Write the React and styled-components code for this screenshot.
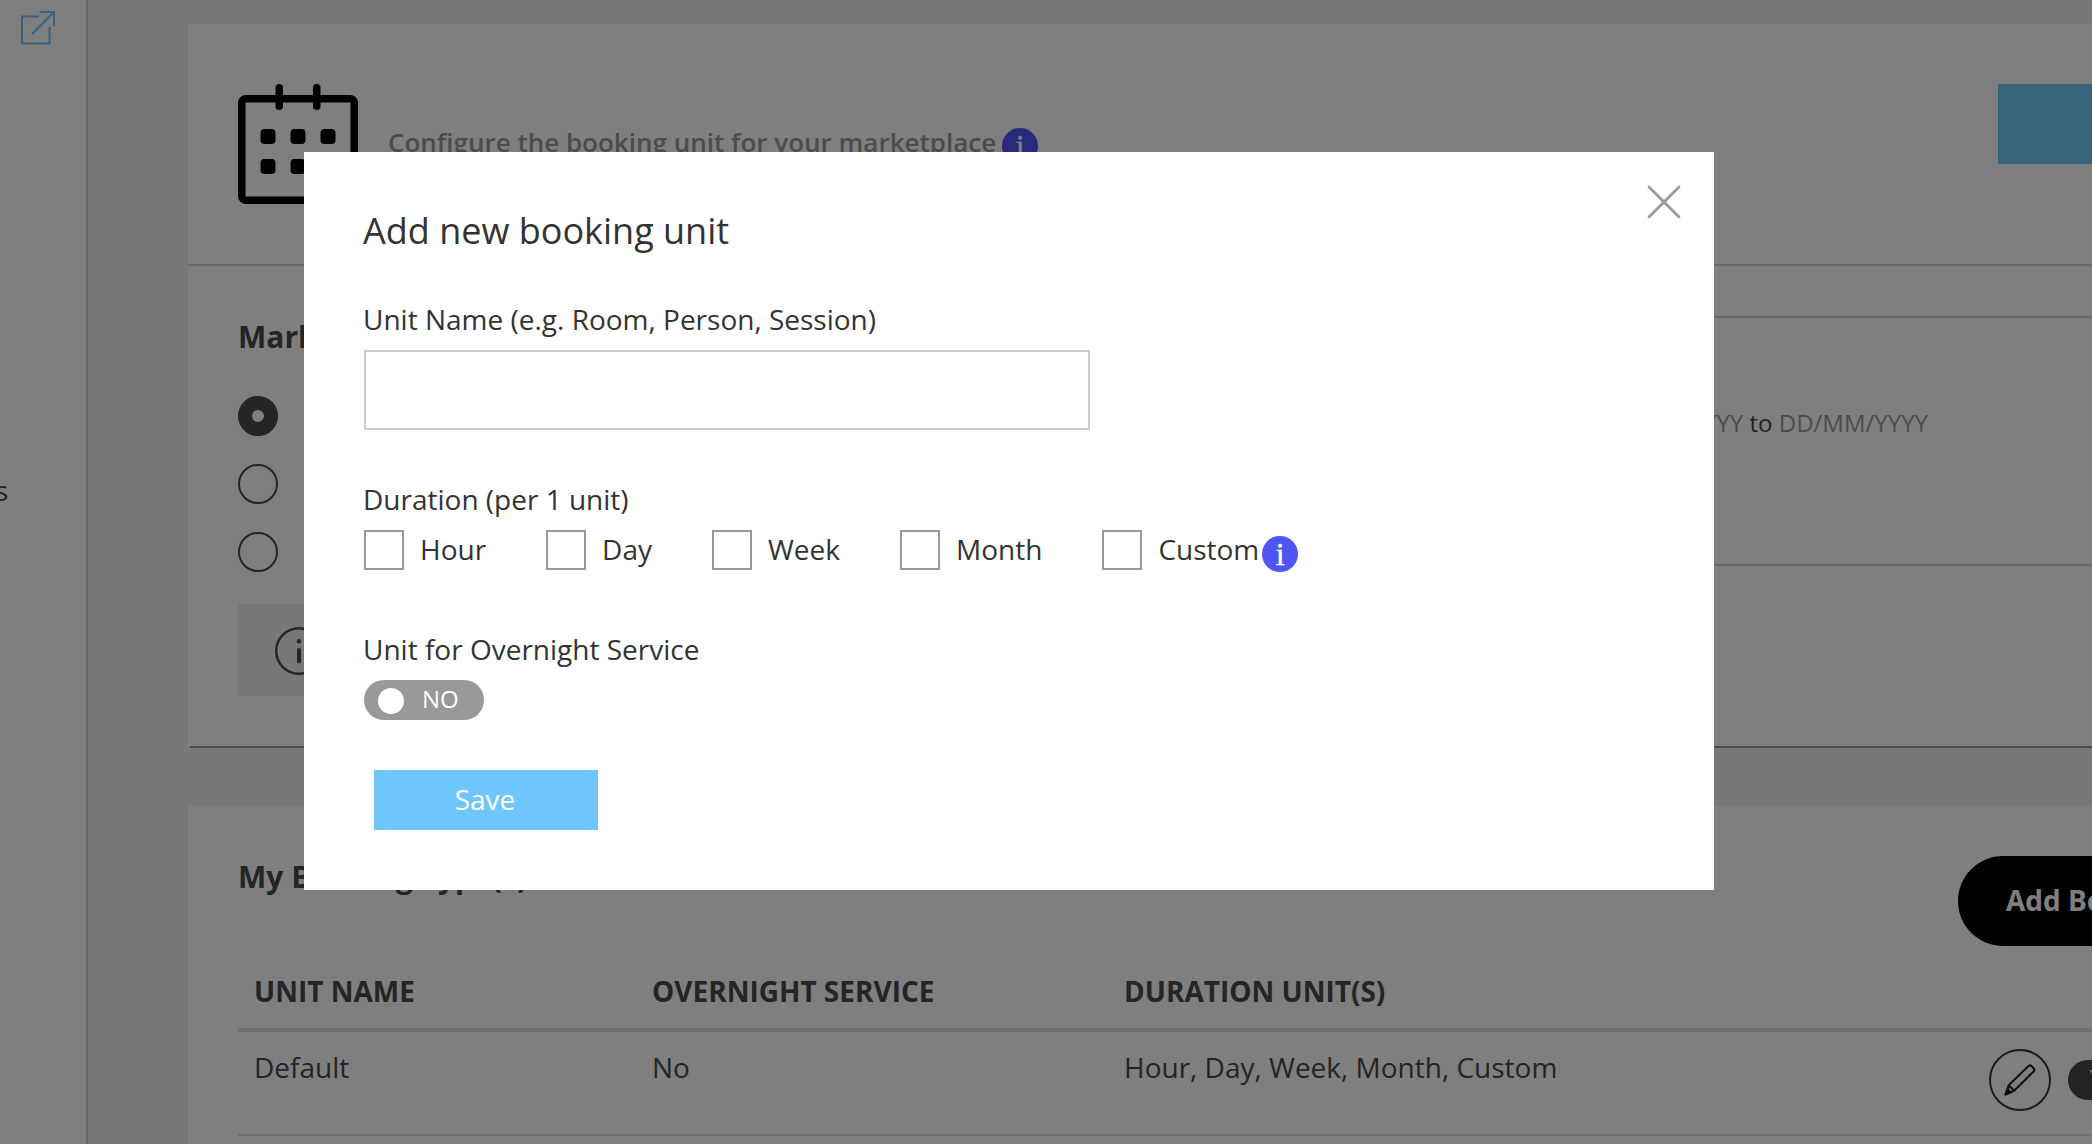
import { useState } from 'react';
import styled, { createGlobalStyle } from 'styled-components';

const GlobalStyle = createGlobalStyle`
  * {
    box-sizing: border-box;
  }
  body {
    margin: 0;
    overflow: hidden;
    background: #f0f0f0;
    color: #4a4a4a;
    font-family: 'Open Sans', sans-serif;
    font-size: 28px;
    line-height: 38px;
  }
  button {
    padding: 0;
    border: none;
    background: none;
    font: inherit;
    cursor: pointer;
  }
`;

// Page

const Page = styled.div`
  display: flex;
  width: 100vw;
  height: 1144px;
  overflow: hidden;
`;

const Sidebar = styled.aside`
  flex: none;
  width: 88px;
  padding: 10px 0 0 20px;
  border-right: 2px solid #d3d3d3;
  background: #fff;

  svg {
    display: block;
  }
`;

const SidebarItem = styled.div`
  width: 13px;
  margin: 425px 0 0 -25px;
`;

const Main = styled.main`
  flex: 1;
  min-width: 0;
  padding: 24px 0 0 100px;
`;

const Card = styled.section`
  background: #fff;
`;

const CardHeader = styled.header`
  display: flex;
  align-items: flex-start;
  height: 242px;
  padding: 60px 0 0 50px;
  border-bottom: 2px solid #d3d3d3;

  svg {
    flex: none;
  }
`;

const HeaderText = styled.div`
  display: flex;
  margin: 39px 0 0 30px;
  color: #999;
  font-size: 26px;
  font-weight: 600;
  white-space: nowrap;
`;

const HeaderButton = styled.button`
  width: 200px;
  height: 80px;
  margin-left: auto;
  margin-right: -106px;
  flex: none;
  background: #70c6fa;
`;

const InfoBadge = styled.span`
  flex: none;
  display: inline-block;
  width: 36px;
  height: 36px;
  margin: ${({ $margin }) => $margin};
  border-radius: 50%;
  background: #5055f5;
  color: #fff;
  font-family: 'Liberation Serif', serif;
  font-size: 32px;
  font-weight: 400;
  line-height: 36px;
  text-align: center;
  -webkit-text-stroke: 0.4px #fff;
`;

const Settings = styled.div`
  display: grid;
  grid-template-columns: 812px 1fr;
  height: 480px;
`;

const SettingsLeft = styled.div`
  padding: 50px 0 0 50px;
`;

const Title = styled.h2`
  margin: 0;
  font-size: 30px;
  font-weight: 700;
  line-height: 42px;
`;

const RadioList = styled.div`
  display: flex;
  flex-direction: column;
  gap: 28px;
  margin: 38px 0 32px;
`;

const Radio = styled.span`
  width: 40px;
  height: 40px;
  border: ${({ $checked }) => ($checked ? '14px' : '2px')} solid #4a4a4a;
  border-radius: 50%;
`;

const Notice = styled.div`
  height: 92px;
  padding: 22px 0 0 36px;
  background: #f0f0f0;
`;

const DateBox = styled.div`
  height: 250px;
  margin-top: 50px;
  padding: 86px 164px 0 0;
  border-top: 2px solid #d3d3d3;
  border-bottom: 2px solid #d3d3d3;
  font-size: 24px;
  text-align: right;

  span {
    color: #999;
  }
`;

const Divider = styled.div`
  height: 2px;
  margin: 0 0 58px 2px;
  background: #999;
`;

const TypesCard = styled(Card)`
  height: 400px;
  padding: 50px 0 0 50px;
`;

const TypesHeader = styled.div`
  display: flex;
  justify-content: space-between;
`;

const AddButton = styled.button`
  flex: none;
  width: 400px;
  height: 90px;
  margin-right: -266px;
  padding: 0 0 2px 48px;
  border-radius: 45px;
  background: #000;
  color: #fff;
  font-weight: 700;
  text-align: left;
`;

const Row = styled.div`
  display: grid;
  grid-template-columns: 398px 472px 865px 1fr;
  padding-left: 16px;
`;

const HeadRow = styled(Row)`
  height: 86px;
  padding-top: 26px;
  border-bottom: 4px solid #dedede;
  font-weight: 700;
`;

const BodyRow = styled(Row)`
  height: 104px;
  padding-top: 16px;
  border-bottom: 2px solid #dedede;
`;

const Actions = styled.div`
  display: flex;
  align-items: center;
  gap: 17px;
  height: 62px;
  margin-top: 1px;
`;

const EditButton = styled.button`
  flex: none;
  display: flex;
  align-items: center;
  justify-content: center;
  width: 62px;
  height: 62px;
  border: 2px solid #363648;
  border-radius: 50%;
`;

const RowSwitch = styled.div`
  flex: none;
  width: 120px;
  height: 40px;
  padding: 0 0 0 22px;
  border-radius: 20px;
  background: #464646;
  color: #fff;
  font-size: 24px;
  line-height: 36px;
`;

// Modal

const Overlay = styled.div`
  position: fixed;
  inset: 0;
  display: flex;
  align-items: flex-start;
  padding: 152px 0 0 304px;
  background: rgba(0, 0, 0, 0.5);
`;

const Dialog = styled.div`
  position: relative;
  width: 1410px;
  height: 738px;
  padding: 55px 60px 0;
  background: #fff;
  color: #333;
`;

const CloseButton = styled.button`
  position: absolute;
  top: 33px;
  right: 33px;
  width: 34px;
  height: 34px;

  svg {
    display: block;
  }
`;

const DialogTitle = styled.h1`
  margin: 0 0 45px -1px;
  font-size: 36px;
  font-weight: 400;
  line-height: 48px;
`;

const Label = styled.div`
  margin: 0 0 12px -1px;
`;

const Input = styled.input`
  display: block;
  width: 726px;
  height: 80px;
  margin: 0 0 50px;
  padding: 0 20px;
  border: 2px solid #ccc;
  outline: none;
  font: inherit;
`;

const CheckList = styled.div`
  display: flex;
  gap: 60px;
  height: 40px;
  margin-bottom: 60px;
`;

const CheckItem = styled.label`
  display: flex;
  gap: 16px;
  cursor: pointer;
`;

const Check = styled.input`
  appearance: none;
  width: 40px;
  height: 40px;
  margin: 0;
  border: 2px solid #999;
  background: ${({ checked }) => (checked ? '#999' : '#fff')};
`;

const Toggle = styled.button`
  display: flex;
  width: 120px;
  height: 40px;
  margin-bottom: 50px;
  padding: 8px 0 0 14px;
  border-radius: 20px;
  background: ${({ $on }) => ($on ? '#4a4a4a' : '#999')};
  color: #fff;
  font-size: 24px;
  line-height: 22px;

  &::before {
    content: '';
    width: 26px;
    height: 26px;
    margin-right: 18px;
    border-radius: 50%;
    background: #fff;
  }
`;

const SaveButton = styled.button`
  display: block;
  width: 224px;
  height: 60px;
  margin-left: 10px;
  padding: 0 2px 2px 0;
  background: #70c6fc;
  color: #fff;
`;

const ExternalIcon = () => (
  <svg width="36" height="36" fill="none" stroke="#70c6fa" strokeWidth="2">
    <path d="M19 6.5H2v27h27.500V17" />
    <path d="M20.500 2H34v13.500M34 2 12.500 23.500" strokeLinecap="round" />
  </svg>
);

const CalendarIcon = () => (
  <svg width="120" height="120" fill="none" stroke="#000">
    <rect x="3.750" y="14.750" width="112.500" height="101.500" rx="4" strokeWidth="7.500" />
    <path d="M41.250 3.750v18.500M78.750 3.750v18.500" strokeWidth="7.500" strokeLinecap="round" />
    {[45, 75].map((y) =>
      [22.5, 52.5, 82.5].map((x) => (
        <rect key={`${x}-${y}`} x={x} y={y} width="15" height="15" rx="4" fill="#000" stroke="none" />
      )),
    )}
  </svg>
);

const NoticeIcon = () => (
  <svg width="50" height="50" fill="none" stroke="#4a4a4a" strokeLinecap="round">
    <circle cx="25" cy="25" r="22.800" strokeWidth="2.500" />
    <path d="M25 24v11.500" strokeWidth="4" />
    <circle cx="25" cy="15.300" r="2.200" fill="#4a4a4a" stroke="none" />
  </svg>
);

const PencilIcon = () => (
  <svg width="32" height="32" fill="none" stroke="#1c1c1c" strokeWidth="2" strokeLinejoin="round">
    <path d="M1.500 30.500 4.500 21.500 24.500 2Q26 .8 27.500 2L29.800 4.500Q31 6 29.800 7.300L10.500 26.500Z" />
    <path d="M4.500 21.500 10.500 26.500M4 23 4.500 27.500" />
    <path d="M1.500 30.500 3.500 25.500 6.500 28.500Z" fill="#1c1c1c" />
  </svg>
);

const CloseIcon = () => (
  <svg width="34" height="34" stroke="#999" strokeWidth="2.700" strokeLinecap="round">
    <path d="M2 2 32 32M32 2 2 32" />
  </svg>
);

const DURATIONS = ['Hour', 'Day', 'Week', 'Month', 'Custom'];

function AddUnitDialog() {
  const [name, setName] = useState('');
  const [selected, setSelected] = useState([]);
  const [overnight, setOvernight] = useState(false);

  const toggleDuration = (item) =>
    setSelected((prev) => (prev.includes(item) ? prev.filter((d) => d !== item) : [...prev, item]));

  return (
    <Overlay>
      <Dialog role="dialog">
        <CloseButton aria-label="Close">
          <CloseIcon />
        </CloseButton>
        <DialogTitle>Add new booking unit</DialogTitle>
        <Label>Unit Name (e.g. Room, Person, Session)</Label>
        <Input value={name} onChange={(e) => setName(e.target.value)} />
        <Label>Duration (per 1 unit)</Label>
        <CheckList>
          {DURATIONS.map((item) => (
            <CheckItem key={item}>
              <Check
                type="checkbox"
                checked={selected.includes(item)}
                onChange={() => toggleDuration(item)}
              />
              <div>{item}</div>
              {item === 'Custom' && <InfoBadge $margin="6px 0 0 -13px">i</InfoBadge>}
            </CheckItem>
          ))}
        </CheckList>
        <Label>Unit for Overnight Service</Label>
        <Toggle $on={overnight} onClick={() => setOvernight(!overnight)}>
          {overnight ? 'YES' : 'NO'}
        </Toggle>
        <SaveButton>Save</SaveButton>
      </Dialog>
    </Overlay>
  );
}

export default function App() {
  return (
    <>
      <GlobalStyle />
      <Page>
        <Sidebar>
          <ExternalIcon />
          <SidebarItem>s</SidebarItem>
        </Sidebar>
        <Main>
          <Card>
            <CardHeader>
              <CalendarIcon />
              <HeaderText>
                Configure the booking unit for your marketplace
                <InfoBadge $margin="5px 0 0 6px">i</InfoBadge>
              </HeaderText>
              <HeaderButton />
            </CardHeader>
            <Settings>
              <SettingsLeft>
                <Title>Mark</Title>
                <RadioList>
                  <Radio $checked />
                  <Radio />
                  <Radio />
                </RadioList>
                <Notice>
                  <NoticeIcon />
                </Notice>
              </SettingsLeft>
              <DateBox>
                <span>DD/MM/YYYY</span> to <span>DD/MM/YYYY</span>
              </DateBox>
            </Settings>
          </Card>
          <Divider />
          <TypesCard>
            <TypesHeader>
              <Title>My Booking Type(s)</Title>
              <AddButton>Add Booking Type</AddButton>
            </TypesHeader>
            <HeadRow>
              <div>UNIT NAME</div>
              <div>OVERNIGHT SERVICE</div>
              <div>DURATION UNIT(S)</div>
            </HeadRow>
            <BodyRow>
              <div>Default</div>
              <div>No</div>
              <div>Hour, Day, Week, Month, Custom</div>
              <Actions>
                <EditButton aria-label="Edit">
                  <PencilIcon />
                </EditButton>
                <RowSwitch>YES</RowSwitch>
              </Actions>
            </BodyRow>
          </TypesCard>
        </Main>
      </Page>
      <AddUnitDialog />
    </>
  );
}
